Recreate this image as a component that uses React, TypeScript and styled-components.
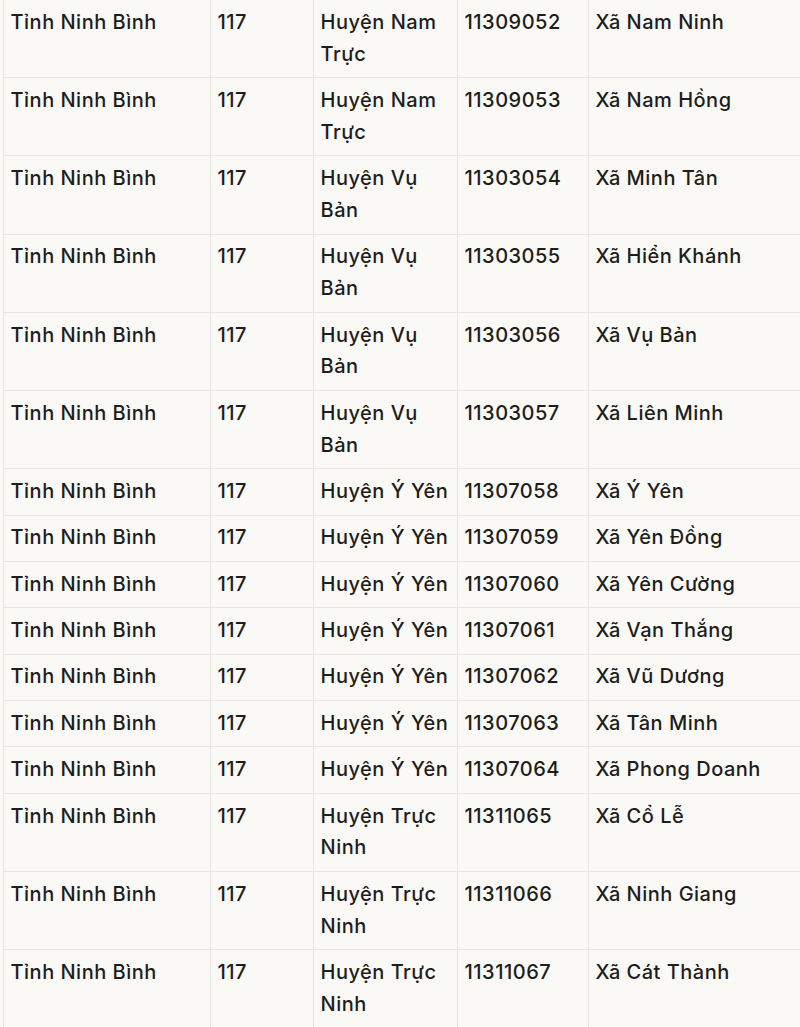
import React from 'react';
import styled, { createGlobalStyle } from 'styled-components';

type Row = {
    district: string;
    code: string;
    commune: string;
};

const rows: Row[] = [
    { district: 'Huyện Nam Trực', code: '11309052', commune: 'Xã Nam Ninh' },
    { district: 'Huyện Nam Trực', code: '11309053', commune: 'Xã Nam Hồng' },
    { district: 'Huyện Vụ Bản', code: '11303054', commune: 'Xã Minh Tân' },
    { district: 'Huyện Vụ Bản', code: '11303055', commune: 'Xã Hiển Khánh' },
    { district: 'Huyện Vụ Bản', code: '11303056', commune: 'Xã Vụ Bản' },
    { district: 'Huyện Vụ Bản', code: '11303057', commune: 'Xã Liên Minh' },
    { district: 'Huyện Ý Yên', code: '11307058', commune: 'Xã Ý Yên' },
    { district: 'Huyện Ý Yên', code: '11307059', commune: 'Xã Yên Đồng' },
    { district: 'Huyện Ý Yên', code: '11307060', commune: 'Xã Yên Cường' },
    { district: 'Huyện Ý Yên', code: '11307061', commune: 'Xã Vạn Thắng' },
    { district: 'Huyện Ý Yên', code: '11307062', commune: 'Xã Vũ Dương' },
    { district: 'Huyện Ý Yên', code: '11307063', commune: 'Xã Tân Minh' },
    { district: 'Huyện Ý Yên', code: '11307064', commune: 'Xã Phong Doanh' },
    { district: 'Huyện Trực Ninh', code: '11311065', commune: 'Xã Cổ Lễ' },
    { district: 'Huyện Trực Ninh', code: '11311066', commune: 'Xã Ninh Giang' },
    { district: 'Huyện Trực Ninh', code: '11311067', commune: 'Xã Cát Thành' },
];

const GlobalStyle = createGlobalStyle`
    html, body {
        margin: 0;
        padding: 0;
        background: #faf9f6;
        overflow: hidden;
    }
`;

function App(){
    return(
        <Page>
            <GlobalStyle />
            <Table>
                {rows.map((row) => (
                    <TableRow key={row.code}>
                        <Cell>Tỉnh Ninh Bình</Cell>
                        <Cell>117</Cell>
                        <Cell>{row.district}</Cell>
                        <Cell>{row.code}</Cell>
                        <Cell>{row.commune}</Cell>
                    </TableRow>
                ))}
            </Table>
        </Page>
    );
}

const Page = styled.div`
    width: 800px;
    height: 1027px;
    overflow: hidden;
    background: #faf9f6;
    padding-left: 3px;
    box-sizing: border-box;
`;

const Table = styled.div`
    width: 830px;
    margin-top: -1px;
    border-top: 1px solid #e6e5e1;
    border-left: 1px solid #e6e5e1;
    font-family: Inter, "Noto Sans", sans-serif;
    font-size: 20px;
    font-weight: 450;
    letter-spacing: 0.5px;
    line-height: 31.8px;
    color: #1d1d1b;
`;

const TableRow = styled.div`
    display: grid;
    grid-template-columns: 207px 103px 144px 131px 1fr;
`;

const Cell = styled.div`
    border-right: 1px solid #e6e5e1;
    border-bottom: 1px solid #e6e5e1;
    padding: 6.8px 0 6.8px 6.5px;
    box-sizing: border-box;
`;

export default App;
